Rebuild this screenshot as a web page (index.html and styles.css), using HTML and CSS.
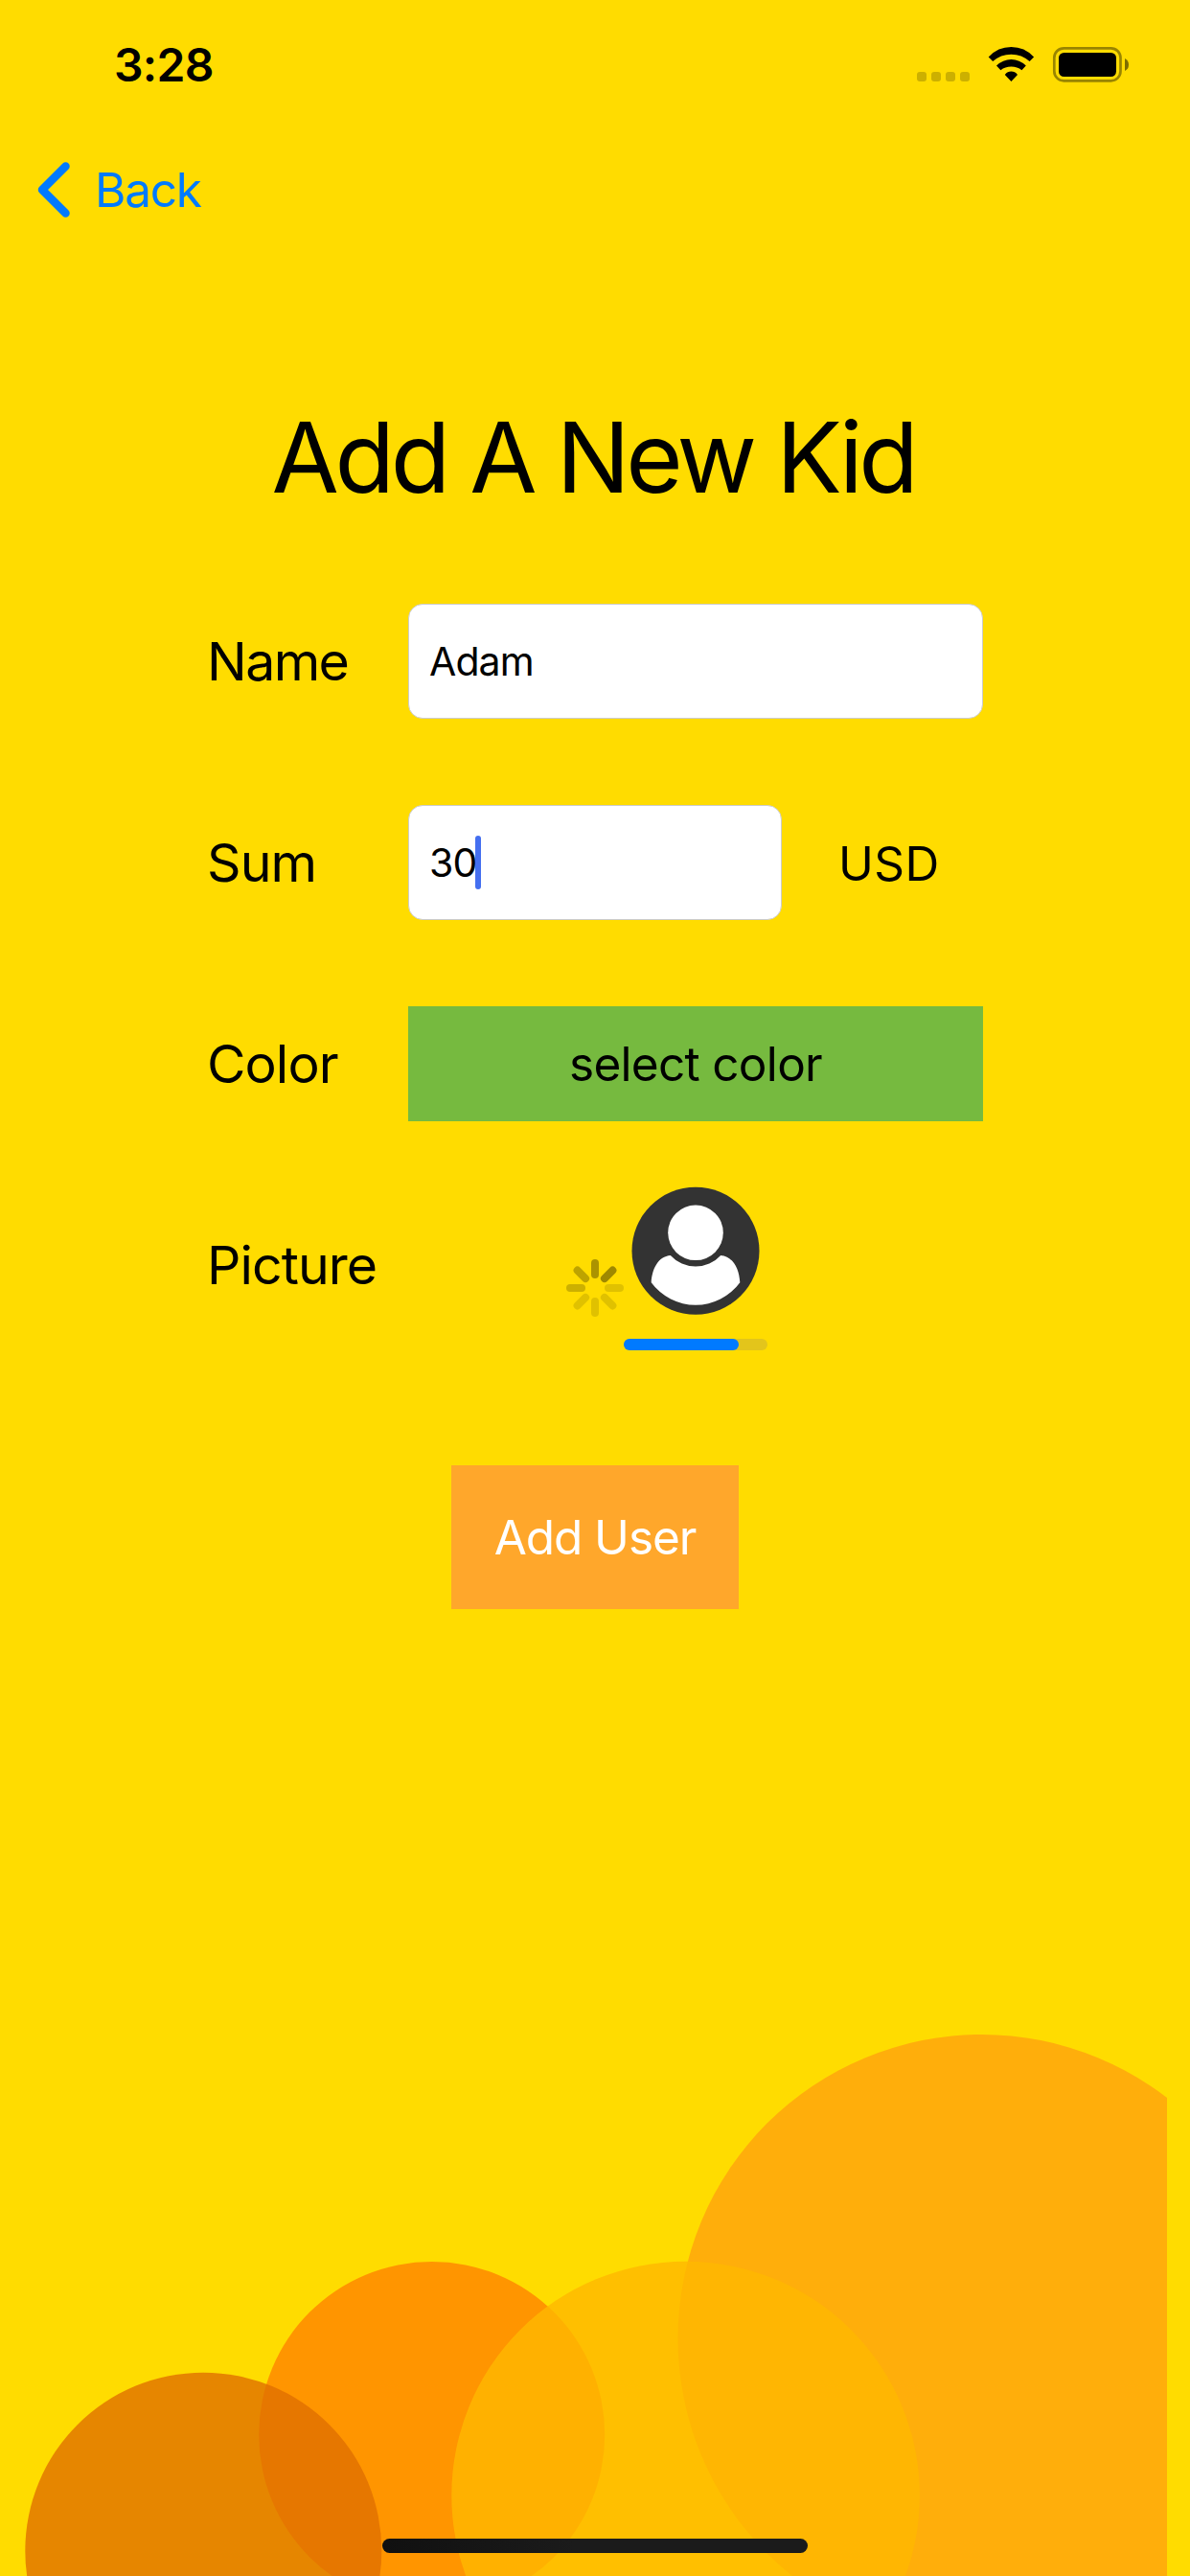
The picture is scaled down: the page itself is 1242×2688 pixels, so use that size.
FILE: index.html
```html
<!DOCTYPE html>
<html lang="en">
<head>
<meta charset="utf-8">
<title>Add A New Kid</title>
<link rel="stylesheet" href="styles.css">
</head>
<body>
<div class="screen">
  <svg class="bubbles" viewBox="0 0 1242 588" aria-hidden="true">
    <clipPath id="edge"><rect width="1218" height="588"/></clipPath>
    <g clip-path="url(#edge)">
      <circle cx="1024.5" cy="352" r="317" fill="#ffae0b" transform="translate(0 -12)"/>
      <circle cx="450.7" cy="440.5" r="180.5" fill="#ff9500"/>
      <circle cx="715.6" cy="504" r="244.3" fill="#ffb800" fill-opacity=".817"/>
      <circle cx="212.3" cy="561.7" r="186" fill="#df6f00" fill-opacity=".79"/>
    </g>
  </svg>
  <header class="status">
    <span class="time">3:28</span>
    <svg class="indicators" viewBox="0 0 222 40" aria-hidden="true">
      <g fill-opacity=".2">
        <rect x="0" y="27" width="10" height="10" rx="3"/>
        <rect x="15" y="27" width="10" height="10" rx="3"/>
        <rect x="30" y="27" width="10" height="10" rx="3"/>
        <rect x="45" y="27" width="10" height="10" rx="3"/>
      </g>
      <path d="M74.7 11.4Q84.5 1 98.4 1T122.1 11.4L117.6 16.1Q109.5 8.7 98.4 8.7T79.2 16.1ZM83 20.6Q89.7 14 98.4 14T113.8 20.6L109.4 25.2Q104.8 21.6 98.4 21.6T87.4 25.2ZM91.8 29.9Q94.6 26.6 98.4 26.6T105 29.9L98.4 37Z"/>
      <rect x="143.3" y="2.3" width="69.2" height="34" rx="10" fill="none" stroke="#000" stroke-opacity=".4" stroke-width="2.7"/>
      <rect x="148" y="7" width="60" height="25" rx="5.5"/>
      <path d="M217 13Q221 15 221 19.5T217 26Z" fill-opacity=".5"/>
    </svg>
  </header>
  <nav class="nav">
    <svg class="chevron" viewBox="0 0 34 58" aria-hidden="true"><path d="M29.500 4.500L5 29 29.500 53.500"/></svg>
    <span class="back">Back</span>
  </nav>
  <main class="form">
    <h1 class="title">Add A New Kid</h1>
    <div class="row"><span class="label name">Name</span><div class="field wide"><span>Adam</span></div></div>
    <div class="row"><span class="label">Sum</span><div class="field narrow"><span>30</span><i class="caret"></i></div><span class="unit">USD</span></div>
    <div class="row"><span class="label">Color</span><div class="color">select color</div></div>
    <div class="row"><span class="label">Picture</span>
      <svg class="photo" viewBox="0 0 240 120" aria-hidden="true">
        <g transform="translate(30 84)" stroke="#000" stroke-width="8" stroke-linecap="round">
          <path d="M0 -14V-26" stroke-opacity=".33"/>
          <path d="M0 -14V-26" transform="rotate(45)" stroke-opacity=".38"/>
          <path d="M0 -14V-26" transform="rotate(90)" stroke-opacity=".12"/>
          <path d="M0 -14V-26" transform="rotate(135)" stroke-opacity=".12"/>
          <path d="M0 -14V-26" transform="rotate(180)" stroke-opacity=".12"/>
          <path d="M0 -14V-26" transform="rotate(225)" stroke-opacity=".12"/>
          <path d="M0 -14V-26" transform="rotate(270)" stroke-opacity=".2"/>
          <path d="M0 -14V-26" transform="rotate(315)" stroke-opacity=".26"/>
        </g>
        <circle cx="135" cy="45.3" r="66.5" fill="#333"/>
        <circle cx="135" cy="26.3" r="28.8" fill="#fff"/>
        <path fill="#fff" d="M108.800 50A35.400 35.400 0 0 0 161.200 50C174 51 180.500 64 181.300 78.200A57.300 57.300 0 0 1 88.700 78.200C89.500 64 96 51 108.800 50Z"/>
        <rect x="60" y="137" width="150" height="12" rx="6" fill="#e3c51b"/>
        <rect x="60" y="137" width="120" height="12" rx="6" fill="#007aff"/>
      </svg>
    </div>
    <div class="submit">Add User</div>
  </main>
  <div class="home"></div>
</div>
</body>
</html>
```
FILE: styles.css
```css
body{margin:0}
.screen{position:relative;width:1242px;height:2688px;overflow:hidden;background:#ffdc00;color:#000;font-family:Inter,"Liberation Sans",sans-serif}
.bubbles{position:absolute;left:0;bottom:0;width:1242px;height:588px}
.status{position:relative;display:flex;justify-content:space-between;height:132px;padding:0 63px 0 119px}
.time{padding-top:38px;font-size:48px;line-height:60px;font-weight:600;letter-spacing:-.7px}
.indicators{width:222px;height:40px;margin-top:48px}
.nav{position:relative;display:flex;align-items:center;gap:26px;height:132px;padding-left:39px;color:#007aff}
.chevron{width:34px;height:58px}
.chevron path{fill:none;stroke:#007aff;stroke-width:8.5;stroke-linecap:round;stroke-linejoin:round}
.back{font-size:49.5px;line-height:60px;letter-spacing:-1.2px}
.form{position:relative}
.title{margin:0;height:366px;padding:150px 4px 0 0;box-sizing:border-box;text-align:center;font-size:102px;line-height:126px;font-weight:400;letter-spacing:-4.3px}
.row{display:flex;align-items:center;height:120px;margin-bottom:90px;padding-left:216px}
.label{width:210px;padding-bottom:1px;font-size:55.4px;letter-spacing:-.9px;white-space:nowrap}
.name{letter-spacing:-1.6px}
.field{box-sizing:border-box;display:flex;align-items:center;height:120px;padding-left:21px;background:#fff;border:1px solid #ccc;border-radius:15px;font-size:41px;letter-spacing:-.9px}
.wide,.color{width:600px}
.narrow{width:390px}
.caret{width:6px;height:56px;margin-left:-1.4px;border-radius:3px;background:#446ff0}
.unit{margin-left:59px;padding-top:2px;font-size:49.5px;letter-spacing:.5px}
.color{display:flex;align-items:center;justify-content:center;height:120px;background:#76ba3f;font-size:49.5px;letter-spacing:-.7px}
.photo{width:240px;height:120px;margin-left:165px;overflow:visible}
.submit{display:flex;align-items:center;justify-content:center;width:300px;height:150px;margin:149px auto 0;background:#ffa72b;color:#fff;font-size:49.5px;letter-spacing:-1.07px}
.home{position:absolute;left:399px;bottom:24px;width:444px;height:15px;border-radius:8px;background:linear-gradient(90deg,#101010,#1b1b1b 45%)}
```
